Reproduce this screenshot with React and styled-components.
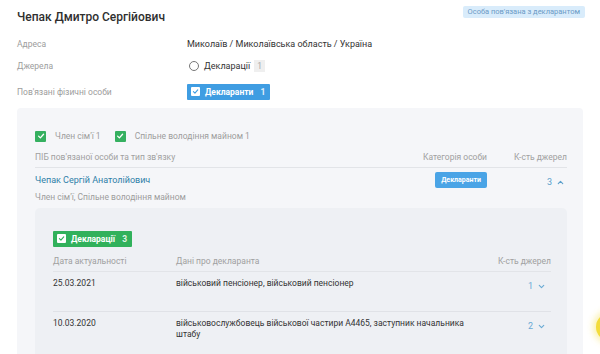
import React from 'react'
import styled, { createGlobalStyle } from 'styled-components'
import { ChevronUp, ChevronDown } from 'lucide-react'

const GlobalStyle = createGlobalStyle`
  body {
    margin: 0;
    background: #fff;
    font-family: Roboto, "Noto Sans", Arial, sans-serif;
    color: #333;
    overflow: hidden;
  }
`

const Page = styled.div`
  width: 600px;
  height: 354px;
  padding: 0 15px 0 17px;
  box-sizing: border-box;
  overflow: hidden;
`

const Header = styled.div`
  display: flex;
  justify-content: space-between;
  align-items: flex-start;
  height: 33px;
`

const Title = styled.h1`
  margin: 10px 0 0;
  font-size: 12px;
  line-height: 14px;
  font-weight: 500;
  color: #2f2f2f;
`

const Badge = styled.span`
  margin-top: 6px;
  background: #d9ecfb;
  color: #6b9bc6;
  font-size: 7.5px;
  line-height: 12px;
  padding: 0 5px;
  border-radius: 2px;
`

const InfoRow = styled.div`
  display: grid;
  grid-template-columns: 170px 1fr;
  align-items: center;
  height: ${p => p.$h || 21}px;
`

const Label = styled.span`
  font-size: 8.5px;
  color: #9d9d9d;
`

const Value = styled.span`
  font-size: 9px;
  color: #333;
`

const SourceChip = styled.span`
  display: inline-flex;
  align-items: center;
  gap: 4px;
  height: 17px;
  padding: 0 2px;
  font-size: 9px;
  color: #333;
`

const Radio = styled.span`
  width: 10px;
  height: 10px;
  border: 1px solid #777;
  border-radius: 50%;
  box-sizing: border-box;
  margin-right: 1px;
`

const Count = styled.span`
  background: #efefef;
  color: #aaa;
  padding: 1px 3px;
  font-size: 8.5px;
`

const FilledChip = styled.span`
  display: inline-flex;
  align-items: center;
  gap: 5px;
  height: 16px;
  padding: 0 5px 0 4px;
  background: ${p => p.$color};
  color: #fff;
  font-size: 8.5px;
  font-weight: 700;
  border-radius: 1px;
  width: fit-content;
  box-sizing: border-box;

  b {
    font-weight: 700;
    opacity: 0.85;
    margin-left: 2px;
  }
`

const WhiteBox = styled.span`
  display: inline-flex;
  align-items: center;
  justify-content: center;
  width: 9px;
  height: 9px;
  background: #fff;
  border-radius: 1px;
`

const Panel = styled.div`
  margin-top: 1px;
  width: 566px;
  background: #f5f6f9;
  border-radius: 4px 4px 0 0;
  padding: 22px 16px 0 18px;
  box-sizing: border-box;
  height: 250px;
`

const Filters = styled.div`
  display: flex;
  align-items: center;
  gap: 14px;
  height: 12px;
  font-size: 8.5px;
  color: #9d9d9d;
`

const Filter = styled.label`
  display: inline-flex;
  align-items: center;
  gap: 9px;
`

const GreenBox = styled.span`
  display: inline-flex;
  align-items: center;
  justify-content: center;
  width: 11px;
  height: 11px;
  background: #35b060;
  border-radius: 1px;
`

const TableHead = styled.div`
  display: grid;
  grid-template-columns: ${p => p.$cols};
  align-items: end;
  margin-top: ${p => p.$mt}px;
  padding-bottom: 5px;
  border-bottom: 1px solid #e2e4e8;
  font-size: 8.5px;
  color: #a0a0a0;
`

const Right = styled.span`
  text-align: right;
`

const PersonRow = styled.div`
  display: grid;
  grid-template-columns: 1fr 120px 80px;
  align-items: center;
  padding-top: 4px;
`

const PersonName = styled.span`
  font-size: 9px;
  color: #2f7fa8;
`

const CategoryTag = styled.span`
  justify-self: end;
  background: #4aa4e6;
  color: #fff;
  font-size: 7px;
  font-weight: 700;
  padding: 0 6px;
  line-height: 16px;
  border-radius: 2px;
`

const Toggle = styled.span`
  justify-self: end;
  display: inline-flex;
  align-items: center;
  gap: 4px;
  font-size: 9px;
  color: ${p => p.$dark ? '#5a9fcb' : '#6aaad4'};
  margin-top: ${p => p.$mt || 0}px;
  margin-right: ${p => p.$mr || 2}px;
`

const Relation = styled.div`
  font-size: 8.5px;
  color: #9d9d9d;
  margin-top: 4px;
`

const Inner = styled.div`
  margin-top: 6px;
  background: #eef0f4;
  border-radius: 5px;
  padding: 19px 16px 0 18px;
  height: 160px;
`

const DeclRow = styled.div`
  display: grid;
  grid-template-columns: 123px 1fr 80px;
  align-items: start;
  padding-top: 6px;
  height: 40px;
  box-sizing: border-box;
  font-size: 8.5px;
  color: #333;
  line-height: 11px;
  border-bottom: ${p => p.$line ? '1px solid #e0e2e7' : 'none'};
`

const DeclText = styled.span`
  max-width: 300px;
`

const HelpBubble = styled.div`
  position: fixed;
  right: -24px;
  top: 313px;
  width: 28px;
  height: 28px;
  border-radius: 50%;
  background: #f3dc3b;
  box-shadow: 0 0 6px 3px rgba(243, 225, 80, 0.45);
`

const Check = ({ color, size = 7 }) => (
  <svg width={size} height={size} viewBox='0 0 10 10'>
    <path d='M2 5.2 L4.2 7.4 L8.2 2.8' fill='none' stroke={color} strokeWidth='1.6' strokeLinecap='round' strokeLinejoin='round' />
  </svg>
)

const declarations = [
  { date: '25.03.2021', text: 'військовий пенсіонер, військовий пенсіонер', count: 1 },
  { date: '10.03.2020', text: 'військовослужбовець військової частири А4465, заступник начальника штабу', count: 2 }
]

export default function App () {
  return (
    <Page>
      <GlobalStyle />
      <Header>
        <Title>Чепак Дмитро Сергійович</Title>
        <Badge>Особа пов'язана з декларантом</Badge>
      </Header>

      <InfoRow $h={22}>
        <Label>Адреса</Label>
        <Value>Миколаїв / Миколаївська область / Україна</Value>
      </InfoRow>
      <InfoRow $h={21}>
        <Label>Джерела</Label>
        <SourceChip>
          <Radio />
          Декларації <Count>1</Count>
        </SourceChip>
      </InfoRow>
      <InfoRow $h={31}>
        <Label>Пов'язані фізичні особи</Label>
        <FilledChip $color='#3f9de2'>
          <WhiteBox><Check color='#3f9de2' /></WhiteBox>
          Декларанти <b>1</b>
        </FilledChip>
      </InfoRow>

      <Panel>
        <Filters>
          <Filter><GreenBox><Check color='#fff' size={8} /></GreenBox>Член сім'ї 1</Filter>
          <Filter><GreenBox><Check color='#fff' size={8} /></GreenBox>Спільне володіння майном 1</Filter>
        </Filters>

        <TableHead $cols='1fr 120px 80px' $mt={10}>
          <span>ПІБ пов'язаної особи та тип зв'язку</span>
          <Right>Категорія особи</Right>
          <Right>К-сть джерел</Right>
        </TableHead>

        <PersonRow>
          <PersonName>Чепак Сергій Анатолійович</PersonName>
          <CategoryTag>Декларанти</CategoryTag>
          <Toggle $dark $mt={4}>3 <ChevronUp size={9} strokeWidth={3} /></Toggle>
        </PersonRow>
        <Relation>Член сім'ї, Спільне володіння майном</Relation>

        <Inner>
          <FilledChip $color='#31b15b'>
            <WhiteBox><Check color='#31b15b' /></WhiteBox>
            Декларації <b>3</b>
          </FilledChip>

          <TableHead $cols='123px 1fr 80px' $mt={9}>
            <span>Дата актуальності</span>
            <span>Дані про декларанта</span>
            <Right>К-сть джерел</Right>
          </TableHead>

          {declarations.map((d, i) => (
            <DeclRow key={d.date} $line={i === 0}>
              <span>{d.date}</span>
              <DeclText>{d.text}</DeclText>
              <Toggle $mt={3} $mr={5}>{d.count} <ChevronDown size={9} strokeWidth={3} /></Toggle>
            </DeclRow>
          ))}
        </Inner>
      </Panel>
      <HelpBubble />
    </Page>
  )
}
